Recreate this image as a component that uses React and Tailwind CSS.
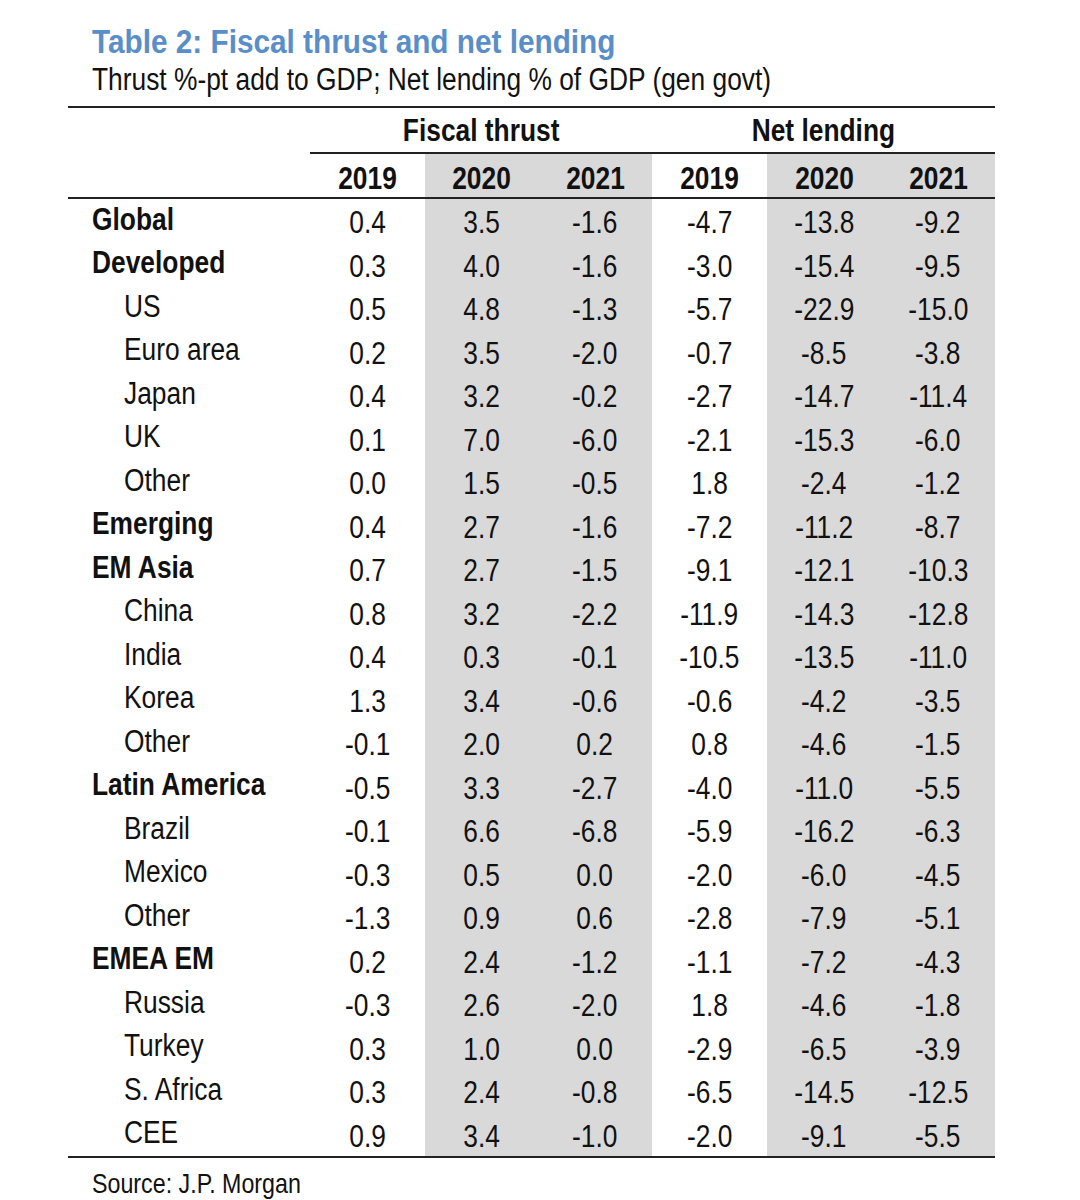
import React from 'react';

const rows = [
  { label: 'Global', bold: true, v: ['0.4', '3.5', '-1.6', '-4.7', '-13.8', '-9.2'] },
  { label: 'Developed', bold: true, v: ['0.3', '4.0', '-1.6', '-3.0', '-15.4', '-9.5'] },
  { label: 'US', v: ['0.5', '4.8', '-1.3', '-5.7', '-22.9', '-15.0'] },
  { label: 'Euro area', v: ['0.2', '3.5', '-2.0', '-0.7', '-8.5', '-3.8'] },
  { label: 'Japan', v: ['0.4', '3.2', '-0.2', '-2.7', '-14.7', '-11.4'] },
  { label: 'UK', v: ['0.1', '7.0', '-6.0', '-2.1', '-15.3', '-6.0'] },
  { label: 'Other', v: ['0.0', '1.5', '-0.5', '1.8', '-2.4', '-1.2'] },
  { label: 'Emerging', bold: true, v: ['0.4', '2.7', '-1.6', '-7.2', '-11.2', '-8.7'] },
  { label: 'EM Asia', bold: true, v: ['0.7', '2.7', '-1.5', '-9.1', '-12.1', '-10.3'] },
  { label: 'China', v: ['0.8', '3.2', '-2.2', '-11.9', '-14.3', '-12.8'] },
  { label: 'India', v: ['0.4', '0.3', '-0.1', '-10.5', '-13.5', '-11.0'] },
  { label: 'Korea', v: ['1.3', '3.4', '-0.6', '-0.6', '-4.2', '-3.5'] },
  { label: 'Other', v: ['-0.1', '2.0', '0.2', '0.8', '-4.6', '-1.5'] },
  { label: 'Latin America', bold: true, v: ['-0.5', '3.3', '-2.7', '-4.0', '-11.0', '-5.5'] },
  { label: 'Brazil', v: ['-0.1', '6.6', '-6.8', '-5.9', '-16.2', '-6.3'] },
  { label: 'Mexico', v: ['-0.3', '0.5', '0.0', '-2.0', '-6.0', '-4.5'] },
  { label: 'Other', v: ['-1.3', '0.9', '0.6', '-2.8', '-7.9', '-5.1'] },
  { label: 'EMEA EM', bold: true, v: ['0.2', '2.4', '-1.2', '-1.1', '-7.2', '-4.3'] },
  { label: 'Russia', v: ['-0.3', '2.6', '-2.0', '1.8', '-4.6', '-1.8'] },
  { label: 'Turkey', v: ['0.3', '1.0', '0.0', '-2.9', '-6.5', '-3.9'] },
  { label: 'S. Africa', v: ['0.3', '2.4', '-0.8', '-6.5', '-14.5', '-12.5'] },
  { label: 'CEE', v: ['0.9', '3.4', '-1.0', '-2.0', '-9.1', '-5.5'] },
];

const shaded = [false, true, true, false, true, true];
const years = ['2019', '2020', '2021', '2019', '2020', '2021'];
const cols = 'grid grid-cols-[242px_115px_113px_114px_115px_114px_114px]';

// narrow look: Arial-width font squeezed horizontally (no Arial Narrow installed)
const Narrow = ({ children, left }) => (
  <span className={`inline-block whitespace-nowrap scale-x-[0.85] ${left ? 'origin-left' : 'origin-center'}`}>
    {children}
  </span>
);

export default function App() {
  return (
    <div
      className="w-[1080px] h-[1200px] bg-white text-[#111] overflow-hidden"
      style={{ fontFamily: '"Liberation Sans", Arial, sans-serif' }}
    >
      {/* Titles */}
      <div className="pl-[92px] pt-[20px]">
        <div className="text-[34px] leading-[42px] font-bold text-[#5a8ec8]">
          <span className="inline-block whitespace-nowrap origin-left scale-x-[0.875]">
            Table 2: Fiscal thrust and net lending
          </span>
        </div>
        <div className="text-[31px] leading-[36px]">
          <Narrow left>Thrust %-pt add to GDP; Net lending % of GDP (gen govt)</Narrow>
        </div>
      </div>

      {/* Table */}
      <div className="ml-[68px] w-[927px] mt-[8px] border-t-2 border-[#222]">
        <div className={`${cols} h-[44px] items-center text-[31px] leading-none font-bold`}>
          <div />
          <div className="col-span-3 text-center"><Narrow>Fiscal thrust</Narrow></div>
          <div className="col-span-3 text-center"><Narrow>Net lending</Narrow></div>
        </div>
        <div className="ml-[242px] h-[2px] bg-[#222]" />
        <div className={`${cols} h-[43px] text-[31px] leading-none font-bold`}>
          <div />
          {years.map((y, i) => (
            <div key={i} className={`flex items-center justify-center pt-[6px] ${shaded[i] ? 'bg-[#d9d9d9]' : ''}`}>
              <Narrow>{y}</Narrow>
            </div>
          ))}
        </div>
        <div className="h-[2px] bg-[#222]" />
        {rows.map((r, ri) => (
          <div key={ri} className={`${cols} h-[43.5px] text-[31px] leading-none`}>
            <div className={`flex items-center pb-[3px] ${r.bold ? 'font-bold pl-[24px]' : 'pl-[56px]'}`}>
              <Narrow left>{r.label}</Narrow>
            </div>
            {r.v.map((n, i) => (
              <div key={i} className={`flex items-center justify-center pt-[4px] ${shaded[i] ? 'bg-[#d9d9d9]' : ''}`}>
                <Narrow>{n}</Narrow>
              </div>
            ))}
          </div>
        ))}
        <div className="h-[2px] bg-[#222]" />
      </div>

      <div className="pl-[92px] pt-[10px] text-[28px] leading-[32px]">
        <span className="inline-block whitespace-nowrap origin-left scale-x-[0.83]">Source: J.P. Morgan</span>
      </div>
    </div>
  );
}
